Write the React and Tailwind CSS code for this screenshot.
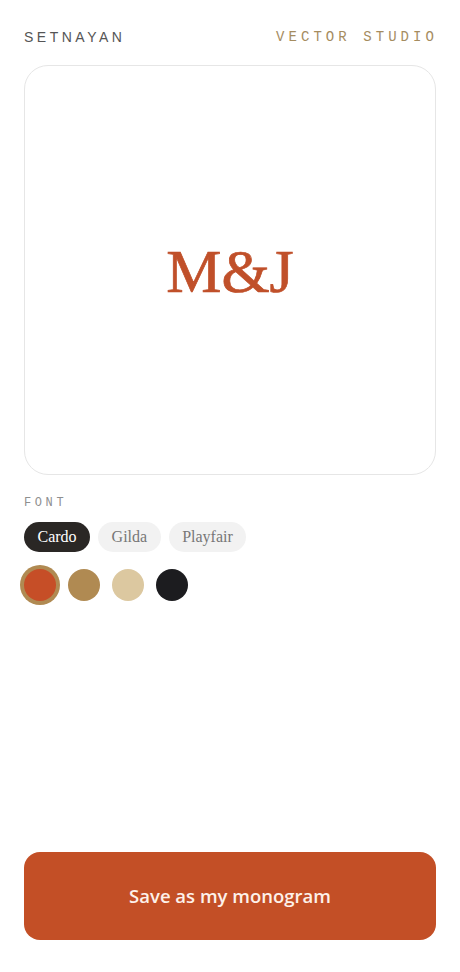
import React, { useState } from "react";

export default function App() {
  const [font, setFont] = useState("Cardo");
  const [color, setColor] = useState(0);
  const swatches = [
    { c: "#c64e27", cls: "bg-[#c64e27]" },
    { c: "#b08a52", cls: "bg-[#b08a52]" },
    { c: "#dcc8a0", cls: "bg-[#dcc8a0]" },
    { c: "#1c1c1f", cls: "bg-[#1c1c1f]" },
  ];
  return (
    <div className="min-h-[972px] w-full bg-white flex flex-col px-6 pt-[27px] pb-8">
      <div className="flex items-center justify-between h-5">
        <span className="text-[14px] leading-5 tracking-[0.25em] text-[#555555] font-['Liberation_Sans',Arial,sans-serif]">
          SETNAYAN
        </span>
        <span className="text-[14px] leading-5 tracking-[0.29em] -mr-[2px] text-[#a58c5f] font-['Liberation_Mono','DejaVu_Sans_Mono',monospace]">
          VECTOR STUDIO
        </span>
      </div>

      <div className="mt-[18px] h-[410px] rounded-3xl border-[1.5px] border-[#e6e6e6] flex items-center justify-center">
        <span className="text-[62px] leading-none text-[#c0502a] pt-[2px] [-webkit-text-stroke:0.7px_#c0502a] font-['Liberation_Serif','Times_New_Roman',serif]">
          M&amp;J
        </span>
      </div>

      <div className="mt-5 text-[12px] leading-4 tracking-[0.3em] text-[#8f8f8f] font-['Liberation_Mono',monospace]">
        FONT
      </div>

      <div className="mt-[11px] flex gap-2">
        {["Cardo", "Gilda", "Playfair"].map((f) => (
          <button
            key={f}
            onClick={() => setFont(f)}
            className={
              "h-[30px] px-[13.5px] rounded-full text-[16px] leading-none font-['Liberation_Serif','Times_New_Roman',serif] " +
              (font === f ? "bg-[#2a2725] text-white" : "bg-[#f2f2f2] text-[#777777]")
            }
          >
            {f}
          </button>
        ))}
      </div>

      <div className="mt-[17px] flex gap-3">
        {swatches.map((s, i) => (
          <button
            key={s.c}
            onClick={() => setColor(i)}
            className={"w-8 h-8 rounded-full " + s.cls + (color === i ? " ring-4 ring-[#b08a52]" : "")}
          />
        ))}
      </div>

      <button className="mt-auto h-[88px] w-full rounded-2xl bg-[#c34f26] text-[#fdf1ea] text-[18.5px] font-semibold font-['Open_Sans',Lato,sans-serif]">
        Save as my monogram
      </button>
    </div>
  );
}
